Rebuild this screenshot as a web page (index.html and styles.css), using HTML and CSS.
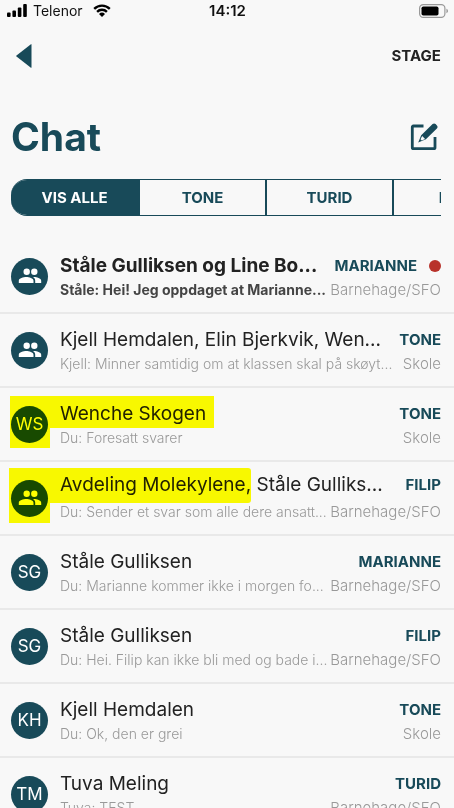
FILE: index.html
```html
<!DOCTYPE html>
<html lang="nb">
<head>
<meta charset="utf-8">
<meta name="viewport" content="width=device-width, initial-scale=1">
<title>Chat</title>
<link rel="stylesheet" href="styles.css">
</head>
<body>
<svg class="defs" aria-hidden="true">
  <symbol id="people" viewBox="0 0 24 24">
    <path d="M16.300 11a3.200 3.200 0 1 0 0-6.400 3.200 3.200 0 0 0 0 6.400zM8.700 11a3.200 3.200 0 1 0 0-6.400 3.200 3.200 0 0 0 0 6.400zM8.300 13C5.500 13 .8 14.200 .8 16.700V19h14.700v-2.300C15.500 14.200 11 13 8.300 13zM16.200 13l-1.200.1c1.300.8 2.200 2 2.200 3.600V19h6v-2.300c0-2.500-4.700-3.700-7-3.700z"/>
  </symbol>
</svg>

<div class="status">
  <div class="carrier">
    <svg class="signal" viewBox="0 0 20 13" aria-hidden="true">
      <rect x="0" y="8.500" width="3.600" height="4.500" rx="1"/>
      <rect x="5.400" y="6.500" width="3.600" height="6.500" rx="1"/>
      <rect x="10.800" y="3.500" width="3.600" height="9.500" rx="1"/>
      <rect x="16.200" y="0" width="3.600" height="13" rx="1"/>
    </svg>
    <span>Telenor</span>
    <svg class="wifi" viewBox="0 0 18 13" aria-hidden="true">
      <path d="M1.200 4.800a11.200 11.200 0 0 1 15.600 0M4.100 7.800a7 7 0 0 1 9.800 0" fill="none" stroke="#000" stroke-width="2.400"/>
      <path d="M6 9.900a4.300 4.300 0 0 1 6 0L9 13z"/>
    </svg>
  </div>
  <span class="clock">14:12</span>
  <svg class="battery" viewBox="0 0 29 14" aria-label="Batteri">
    <rect x=".6" y=".6" width="25.300" height="12.800" rx="3.600" fill="none" stroke="#999" stroke-width="1.200"/>
    <rect x="2.500" y="2.500" width="17" height="9" rx="1.800"/>
    <path d="M27.500 4.800c1.800.7 1.800 3.700 0 4.400z" fill="#888"/>
  </svg>
</div>

<nav class="topbar">
  <button class="back" aria-label="Tilbake">
    <svg viewBox="0 0 16 24" aria-hidden="true"><path d="M15.500.6v22.800c0 .5-.5.5-.9.2L.5 12.600a.8.8 0 0 1 0-1.200L14.600.4c.4-.3.900-.3.900.2z"/></svg>
  </button>
  <a class="stage" href="#">STAGE</a>
</nav>

<header class="heading">
  <h1>Chat</h1>
  <button class="compose" aria-label="Ny melding">
    <svg viewBox="0 0 28 28" aria-hidden="true">
      <path d="M13.500 3H3.500C2.500 3 2.300 3.400 2.300 4.200v20.300c0 .8.400 1.200 1.200 1.200h20.300c.8 0 1.200-.4 1.200-1.200V14" fill="none" stroke="#184a59" stroke-width="2.800"/>
      <path d="M22.600 1.100c.9-.9 2.100-.9 3 0l1.300 1.300c.9.900.9 2.100 0 3L15.900 16.300 8.200 19.600l3-7.300z"/>
      <path d="M12.200 13l2.900 2.900-3.300 1.700-1.300-1.300z" fill="#f8f8f8"/>
    </svg>
  </button>
</header>

<div class="tabs">
  <button class="tab active">VIS ALLE</button>
  <button class="tab">TONE</button>
  <button class="tab">TURID</button>
  <button class="tab">FILIP</button>
</div>

<main class="list">
  <article class="row unread">
    <span class="avatar"><svg><use href="#people"/></svg></span>
    <div class="lines">
      <div class="line"><h2>Ståle Gulliksen og Line Bo...</h2><b class="child">MARIANNE<i class="dot"></i></b></div>
      <div class="line sub"><p>Ståle: Hei! Jeg oppdaget at Marianne...</p><span>Barnehage/SFO</span></div>
    </div>
  </article>
  <article class="row">
    <span class="avatar"><svg><use href="#people"/></svg></span>
    <div class="lines">
      <div class="line"><h2>Kjell Hemdalen, Elin Bjerkvik, Wen...</h2><b class="child">TONE</b></div>
      <div class="line sub"><p>Kjell: Minner samtidig om at klassen skal på skøyt...</p><span>Skole</span></div>
    </div>
  </article>
  <article class="row marked">
    <span class="avatar">WS</span>
    <div class="lines">
      <div class="line"><h2>Wenche Skogen</h2><b class="child">TONE</b></div>
      <div class="line sub"><p>Du: Foresatt svarer</p><span>Skole</span></div>
    </div>
  </article>
  <article class="row marked group">
    <span class="avatar"><svg><use href="#people"/></svg></span>
    <div class="lines">
      <div class="line"><h2>Avdeling Molekylene, Ståle Gulliks...</h2><b class="child">FILIP</b></div>
      <div class="line sub"><p>Du: Sender et svar som alle dere ansatt...</p><span>Barnehage/SFO</span></div>
    </div>
  </article>
  <article class="row">
    <span class="avatar">SG</span>
    <div class="lines">
      <div class="line"><h2>Ståle Gulliksen</h2><b class="child">MARIANNE</b></div>
      <div class="line sub"><p>Du: Marianne kommer ikke i morgen fo...</p><span>Barnehage/SFO</span></div>
    </div>
  </article>
  <article class="row">
    <span class="avatar">SG</span>
    <div class="lines">
      <div class="line"><h2>Ståle Gulliksen</h2><b class="child">FILIP</b></div>
      <div class="line sub"><p>Du: Hei. Filip kan ikke bli med og bade i...</p><span>Barnehage/SFO</span></div>
    </div>
  </article>
  <article class="row">
    <span class="avatar">KH</span>
    <div class="lines">
      <div class="line"><h2>Kjell Hemdalen</h2><b class="child">TONE</b></div>
      <div class="line sub"><p>Du: Ok, den er grei</p><span>Skole</span></div>
    </div>
  </article>
  <article class="row">
    <span class="avatar">TM</span>
    <div class="lines">
      <div class="line"><h2>Tuva Meling</h2><b class="child">TURID</b></div>
      <div class="line sub"><p>Tuva: TEST</p><span>Barnehage/SFO</span></div>
    </div>
  </article>
</main>
</body>
</html>
```
FILE: styles.css
```css
* { box-sizing: border-box; }

body {
  margin: 0;
  height: 100vh;
  overflow: hidden;
  display: flex;
  flex-direction: column;
  background: #f8f8f8;
  color: #222;
  font-family: Inter, "Liberation Sans", sans-serif;
}

h1, h2, p { margin: 0; }

button {
  padding: 0;
  border: 0;
  background: none;
  font: inherit;
  color: inherit;
}

svg { display: block; }

.defs { position: absolute; width: 0; height: 0; }

.status {
  flex: none;
  display: grid;
  grid-template-columns: 1fr auto 1fr;
  align-items: center;
  height: 21px;
  padding: 0 6px 0 7px;
  color: #111;
  font-size: 14px;
}

.carrier { display: flex; align-items: center; gap: 6px; }
.carrier span { margin-right: 4px; }
.signal { width: 20px; height: 13px; }
.wifi { width: 18px; height: 13px; }
.clock { font-size: 15px; font-weight: 600; }
.battery { width: 29px; height: 14px; justify-self: end; }

.topbar {
  flex: none;
  display: flex;
  align-items: center;
  justify-content: space-between;
  height: 69px;
  padding: 0 13px 0 16px;
}

.back svg { width: 16px; height: 24px; fill: #184a59; }

.stage {
  color: #222;
  font-size: 15px;
  font-weight: 700;
  text-decoration: none;
}

.heading {
  flex: none;
  display: flex;
  align-items: center;
  justify-content: space-between;
  height: 89px;
  padding: 4px 16px 0 11px;
  color: #184a59;
}

.heading h1 { font-size: 39px; line-height: 48px; }
.compose svg { width: 28px; height: 28px; fill: #184a59; }

.tabs {
  flex: none;
  display: flex;
  height: 37px;
  margin: 0 13px 0 11px;
  overflow: hidden;
  border: solid #184a59;
  border-width: 1px 0;
  border-radius: 16px 0 0 16px;
}

.tab {
  flex: 0 0 127px;
  border-right: 2px solid #184a59;
  color: #184a59;
  font-size: 15px;
  font-weight: 700;
}

.tab.active { background: #184a59; color: #fff; flex-basis: 129px; }

.list { flex: 1; min-height: 0; padding-top: 24px; overflow: hidden; }

.row {
  position: relative;
  display: flex;
  align-items: center;
  gap: 12px;
  height: 74px;
  padding: 0 13px 0 11px;
  border-bottom: 2px solid #e9e9e9;
}

.avatar {
  flex: none;
  display: grid;
  place-items: center;
  width: 37px;
  height: 37px;
  border-radius: 50%;
  background: #184a59;
  color: #fff;
  font-size: 17px;
}

.avatar svg { width: 24px; height: 24px; fill: #fff; }

.lines { flex: 1; min-width: 0; padding-top: 1px; }

.line {
  display: flex;
  align-items: center;
  justify-content: space-between;
  height: 26px;
  white-space: nowrap;
}

.line h2 { font-size: 19px; font-weight: 400; }
.child { display: flex; align-items: center; color: #184a59; font-size: 15px; }
.dot { width: 12px; height: 12px; margin-left: 12px; border-radius: 50%; background: #b8322a; }

.sub { height: 22px; color: #999; font-size: 15px; font-weight: 300; }
.sub p { font-size: 14px; }

.unread h2 { font-weight: 700; }
.unread p { color: #444; font-weight: 700; }

.group .line:first-child { height: 29px; margin-top: -3px; padding-bottom: 3px; }

/* marker pen over the avatar and the name */
.marked::before,
.marked::after {
  content: "";
  position: absolute;
  z-index: 1;
  top: 8px;
  left: 10px;
  background: #ff0;
  mix-blend-mode: multiply;
}

.marked::before { width: 40px; height: 52px; }
.marked::after { left: 50px; width: 164px; height: 32px; }
.group::before { top: 6px; left: 9px; width: 41px; height: 55px; }
.group::after { top: 6px; width: 201px; height: 35px; border-radius: 0 3px 3px 0; }
```
